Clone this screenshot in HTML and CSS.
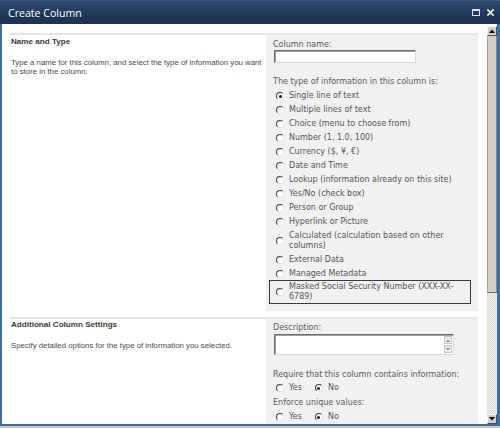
FILE: index.html
```html
<!DOCTYPE html>
<html>
<head>
<meta charset="utf-8">
<title>Create Column</title>
<link rel="stylesheet" href="styles.css">
</head>
<body>
<div class="win">
  <div class="titlebar">
    <span class="title">Create Column</span>
    <svg class="tb-ico" width="8" height="7" viewBox="0 0 8 7"><rect x="0.5" y="0.5" width="7" height="6" fill="none" stroke="#d8dde6" stroke-width="1"/><rect x="0" y="0" width="8" height="2" fill="#d8dde6"/></svg>
    <svg class="tb-ico close" width="7" height="7" viewBox="0 0 7 7"><path d="M1 1 L6 6 M6 1 L1 6" stroke="#ffffff" stroke-width="1.7" stroke-linecap="square"/></svg>
  </div>
  <div class="frame">
    <div class="content">
      <section class="sec sec1">
        <div class="sec-left">
          <h3>Name and Type</h3>
          <p>Type a name for this column, and select the type of information you want to store in the column.</p>
        </div>
        <div class="sec-right">
          <div class="fl">Column name:</div>
          <div class="txt"></div>
          <div class="fl type-lbl">The type of information in this column is:</div>
          <div class="opts">
            <div class="opt"><span class="radio on"></span><span class="ol">Single line of text</span></div>
            <div class="opt"><span class="radio"></span><span class="ol">Multiple lines of text</span></div>
            <div class="opt"><span class="radio"></span><span class="ol">Choice (menu to choose from)</span></div>
            <div class="opt"><span class="radio"></span><span class="ol">Number (1, 1.0, 100)</span></div>
            <div class="opt"><span class="radio"></span><span class="ol">Currency ($, ¥, €)</span></div>
            <div class="opt"><span class="radio"></span><span class="ol">Date and Time</span></div>
            <div class="opt"><span class="radio"></span><span class="ol">Lookup (information already on this site)</span></div>
            <div class="opt"><span class="radio"></span><span class="ol">Yes/No (check box)</span></div>
            <div class="opt"><span class="radio"></span><span class="ol">Person or Group</span></div>
            <div class="opt"><span class="radio"></span><span class="ol">Hyperlink or Picture</span></div>
            <div class="opt"><span class="radio"></span><span class="ol">Calculated (calculation based on other columns)</span></div>
            <div class="opt"><span class="radio"></span><span class="ol">External Data</span></div>
            <div class="opt"><span class="radio"></span><span class="ol">Managed Metadata</span></div>
            <div class="opt focus"><span class="radio"></span><span class="ol">Masked Social Security Number (XXX-XX-6789)</span></div>
          </div>
        </div>
      </section>
      <section class="sec sec2">
        <div class="sec-left">
          <h3>Additional Column Settings</h3>
          <p>Specify detailed options for the type of information you selected.</p>
        </div>
        <div class="sec-right">
          <div class="fl">Description:</div>
          <div class="ta">
            <div class="ta-sb">
              <span class="ta-btn"><svg width="4" height="3" viewBox="0 0 4 3"><path d="M0 3 L2 0.5 L4 3 Z" fill="#8a8a8a"/></svg></span>
              <span class="ta-btn"><svg width="4" height="3" viewBox="0 0 4 3"><path d="M0 0 L2 2.5 L4 0 Z" fill="#8a8a8a"/></svg></span>
            </div>
          </div>
          <div class="fl req">Require that this column contains information:</div>
          <div class="yn">
            <span class="radio"></span><span class="ol">Yes</span>
            <span class="radio on r2"></span><span class="ol">No</span>
          </div>
          <div class="fl enf">Enforce unique values:</div>
          <div class="yn yn2">
            <span class="radio"></span><span class="ol">Yes</span>
            <span class="radio on r2"></span><span class="ol">No</span>
          </div>
        </div>
      </section>
    </div>
    <div class="sb">
      <div class="sb-btn"><svg width="6" height="4" viewBox="0 0 6 4"><path d="M0 4 L3 0.5 L6 4 Z" fill="#000"/></svg></div>
      <div class="sb-thumb"></div>
      <div class="sb-track"></div>
      <div class="sb-btn"><svg width="6" height="4" viewBox="0 0 6 4"><path d="M0 0 L3 3.5 L6 0 Z" fill="#000"/></svg></div>
    </div>
  </div>
</div>
</body>
</html>
```
FILE: styles.css
```css
* { box-sizing: border-box; margin: 0; padding: 0; }

body {
  width: 500px;
  height: 428px;
  overflow: hidden;
  background: #c9c9c9;
  font-family: "DejaVu Sans", Verdana, sans-serif;
  font-size: 8px;
  line-height: 10px;
  color: #555555;
}

.win {
  width: 500px;
  height: 426px;
  display: flex;
  flex-direction: column;
}

.titlebar {
  height: 24px;
  flex: none;
  display: flex;
  align-items: center;
  padding: 0 6px 0 8px;
  background: linear-gradient(#2d4b72, #1e3759 60%, #1b3354);
  border-top: 1px solid #3c5a82;
}

.title {
  flex: 1;
  color: #ffffff;
  font-family: "Open Sans", "DejaVu Sans", sans-serif;
  font-size: 10.6px;
  line-height: 14px;
}

.tb-ico { display: block; }
.tb-ico.close { margin-left: 7px; }

.frame {
  flex: 1;
  min-height: 0;
  display: flex;
  border-style: solid;
  border-color: #3e6ea6;
  border-width: 0 3px 2px 2px;
}

.content {
  flex: 1;
  min-width: 0;
  background: #ffffff;
  padding: 9px 9px 0 8px;
  overflow: hidden;
}

.sec {
  display: grid;
  grid-template-columns: 256px 1fr;
  border-top: 2px solid #e5e5e5;
}

.sec2 { margin-top: 6px; }

.sec-left {
  padding: 2px 0 0 1px;
  font-family: "Liberation Sans", Arial, sans-serif;
}
.sec2 .sec-left { padding-top: 1px; }

h3 {
  font-size: 8.1px;
  line-height: 10px;
  font-weight: bold;
  color: #3a3a3a;
  margin-bottom: 11px;
}

.sec-left p {
  font-size: 7.8px;
  line-height: 9px;
  color: #4a4a4a;
}

.sec-right {
  background: #f1f1f1;
  padding: 5px 7px 7px 7px;
}
.sec2 .sec-right { padding-top: 4px; }

.fl { color: #5a5a5a; }

.txt {
  width: 142px;
  height: 13px;
  margin-left: 1px;
  background: #ffffff;
  border: 1px solid;
  border-color: #6e6e6e #dcd8d0 #dcd8d0 #6e6e6e;
  box-shadow: inset 1px 1px 0 #a0a0a0;
}

.type-lbl { margin-top: 14px; }

.opts { margin-top: 2px; }

.opt {
  display: flex;
  align-items: center;
  padding: 2px 0 2px 3px;
}

.opt.focus {
  border: 1px solid #3a3a3a;
  margin: -1px 0 0 -4px;
  padding: 0.5px 0 1.5px 6px;
}

.ol { color: #555555; }
.opt .ol { flex: 1; }

.radio {
  flex: none;
  position: relative;
  width: 8px;
  height: 8px;
  margin-right: 5px;
  border-radius: 50%;
  border: 1px solid;
  border-color: #3c3c3c #e4e4e4 #e4e4e4 #3c3c3c;
  background: #ffffff;
}

.radio.on::after {
  content: "";
  position: absolute;
  left: 1.5px;
  top: 1.5px;
  width: 3px;
  height: 3px;
  border-radius: 50%;
  background: #111111;
}

.ta {
  width: 180px;
  height: 21px;
  margin: 1px 0 0 1px;
  background: #ffffff;
  border: 1px solid;
  border-color: #6e6e6e #dcd8d0 #dcd8d0 #6e6e6e;
  box-shadow: inset 1px 1px 0 #a0a0a0;
  display: flex;
  justify-content: flex-end;
  padding: 1px;
}

.ta-sb {
  width: 8px;
  display: flex;
  flex-direction: column;
  justify-content: space-between;
}

.ta-btn {
  height: 8px;
  display: flex;
  align-items: center;
  justify-content: center;
  background: #ececec;
  border: 1px solid #c4c4c4;
}

.ta-btn svg { display: block; }

.req { margin-top: 15px; }
.enf { margin-top: 3px; }

.yn {
  display: flex;
  align-items: center;
  padding: 2px 0 2px 3px;
  margin-top: 1px;
}
.yn2 { margin-top: 2px; }

.yn .r2 { margin-left: 13px; }

.sb {
  width: 10px;
  flex: none;
  display: flex;
  flex-direction: column;
  background: #ffffff;
  padding-top: 2px;
}

.sb-btn {
  height: 10px;
  flex: none;
  display: flex;
  align-items: center;
  justify-content: center;
  background: #d4d0c8;
  border: 1px solid;
  border-color: #f4f4f4 #505050 #505050 #f4f4f4;
}

.sb-btn svg { display: block; }

.sb-thumb {
  height: 257px;
  flex: none;
  background: #d5cec5;
  border-left: 1px solid #aaa39a;
  border-right: 1px solid #8f8a82;
  border-bottom: 1px solid #6f6b65;
}

.sb-track {
  flex: 1;
  background: repeating-conic-gradient(#f4f2ee 0 25%, #dcd7cf 0 50%) 0 0 / 2px 2px;
}
```
